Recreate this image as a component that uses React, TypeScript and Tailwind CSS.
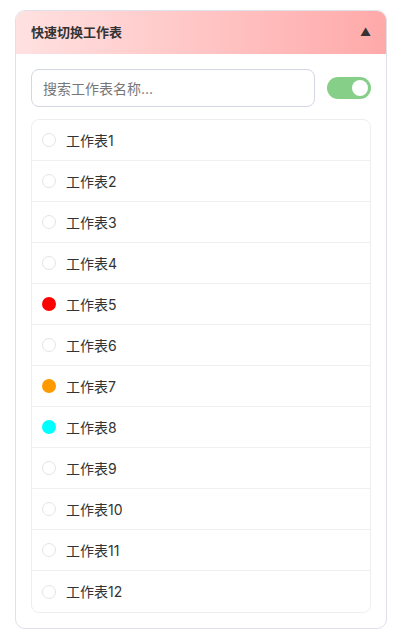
import { useState } from 'react'

const SHEETS: { name: string; color?: string }[] = [
  { name: '工作表1' },
  { name: '工作表2' },
  { name: '工作表3' },
  { name: '工作表4' },
  { name: '工作表5', color: '#ff0000' },
  { name: '工作表6' },
  { name: '工作表7', color: '#ff9900' },
  { name: '工作表8', color: '#00ffff' },
  { name: '工作表9' },
  { name: '工作表10' },
  { name: '工作表11' },
  { name: '工作表12' },
]

export default function App() {
  const [query, setQuery] = useState('')
  const [on, setOn] = useState(true)

  const list = SHEETS.filter((s) => s.name.includes(query))

  return (
    <div
      className="min-h-screen bg-white px-[15px] pt-[10px]"
      style={{ fontFamily: 'Inter, "Noto Sans CJK SC", sans-serif' }}
    >
      <div className="w-[372px] overflow-hidden rounded-[10px] border border-[#dfe0ea] bg-white">
        {/* Header */}
        <div className="flex h-[43px] items-center justify-between bg-gradient-to-r from-[#ffe1e1] to-[#ffa9a9] px-[15px]">
          <span className="text-[13px] font-bold text-[#333]">快速切换工作表</span>
          <span className="text-[11px] text-[#333]">▲</span>
        </div>

        <div className="px-[15px] pt-[15px] pb-[15px]">
          {/* Search + toggle */}
          <div className="flex items-center gap-3">
            <input
              value={query}
              onChange={(e) => setQuery(e.target.value)}
              placeholder="搜索工作表名称..."
              className="h-[38px] flex-1 rounded-lg border border-[#d3d7e3] px-[11px] text-[14px] text-[#333] placeholder:text-[#777] outline-none"
            />
            <button
              onClick={() => setOn(!on)}
              className={`flex h-[22px] w-[44px] items-center rounded-full px-[3px] ${
                on ? 'justify-end bg-[#86cf88]' : 'justify-start bg-gray-300'
              }`}
            >
              <span className="h-[16px] w-[16px] rounded-full bg-white" />
            </button>
          </div>

          {/* List */}
          <div className="mt-[12px] overflow-hidden rounded-lg border border-[#eeeef2]">
            {list.map((s, i) => (
              <div
                key={s.name}
                className={`flex h-[41px] items-center gap-[10px] px-[10px] ${
                  i < list.length - 1 ? 'border-b border-[#f0f0f2]' : ''
                }`}
              >
                <span
                  className={`h-[14px] w-[14px] rounded-full ${
                    s.color ? '' : 'border border-[#e4e4e8]'
                  }`}
                  style={s.color ? { backgroundColor: s.color } : undefined}
                />
                <span className="text-[14px] text-[#333]">{s.name}</span>
              </div>
            ))}
          </div>
        </div>
      </div>
    </div>
  )
}
